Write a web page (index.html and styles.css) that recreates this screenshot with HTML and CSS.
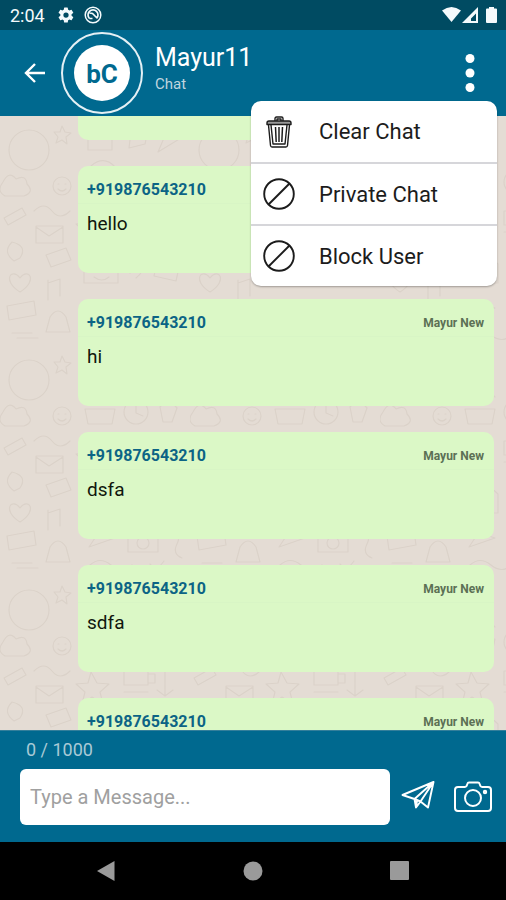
FILE: index.html
```html
<!DOCTYPE html>
<html lang="en">
<head>
<meta charset="utf-8">
<meta name="viewport" content="width=device-width, initial-scale=1">
<title>Mayur11 - Chat</title>
<link rel="stylesheet" href="styles.css">
</head>
<body>
<div class="app">
  <div class="status">
    <span class="time">2:04</span>
    <svg class="gear" width="18" height="18" viewBox="0 0 24 24"><path fill="currentColor" d="M19.4 13a7.500 7.500 0 0 0 0-2l2.100-1.600a.5.5 0 0 0 .1-.7l-2-3.400a.5.5 0 0 0-.6-.2l-2.500 1a7.300 7.300 0 0 0-1.700-1l-.4-2.600a.5.5 0 0 0-.5-.5h-4a.5.5 0 0 0-.5.5L9 5.100a7.300 7.300 0 0 0-1.700 1l-2.500-1a.5.5 0 0 0-.6.2l-2 3.400a.5.5 0 0 0 .1.7L4.500 11a7.500 7.500 0 0 0 0 2l-2.200 1.600a.5.5 0 0 0-.1.7l2 3.400c.1.200.4.300.6.200l2.500-1a7.300 7.300 0 0 0 1.700 1l.4 2.600c0 .3.200.5.5.5h4c.3 0 .5-.2.5-.5l.4-2.600a7.300 7.300 0 0 0 1.700-1l2.500 1c.2.100.5 0 .6-.2l2-3.400a.5.5 0 0 0-.1-.7zM12 15.500a3.500 3.500 0 1 1 0-7 3.500 3.500 0 0 1 0 7z"/></svg>
    <svg class="pie" width="18" height="18" viewBox="0 0 18 18" fill="none" stroke="currentColor"><circle cx="9" cy="9" r="7.800" stroke-width="1.500"/><path stroke-width="1.700" d="M5.500 12.500A5 5 0 1 1 12.500 12.500M5.500 12.500h3M5.500 7l3 .5 4 4"/></svg>
    <svg class="signal" width="56" height="18" viewBox="0 0 56 18" fill="currentColor"><path d="M0 4.500Q9.500-2.500 19 4.500L9.500 16z"/><path fill-rule="evenodd" d="M20 17L36 1v16zM29 15h5V7.500l-5 5z"/><path d="M45 2.500h2V1h5v1.500h2a1 1 0 0 1 1 1V16a1 1 0 0 1-1 1h-9a1 1 0 0 1-1-1V3.500a1 1 0 0 1 1-1z"/></svg>
  </div>

  <header class="header">
    <button class="back" aria-label="Back"><svg width="22" height="20" viewBox="0 0 22 20" fill="none" stroke="currentColor" stroke-width="2.400"><path d="M21 10H2M11 1L2 10l9 9"/></svg></button>
    <div class="avatar"><span class="initials">bC</span></div>
    <div class="heading">
      <h1 class="name">Mayur11</h1>
      <p class="kind">Chat</p>
    </div>
    <button class="more" aria-label="More options"><svg width="10" height="40" viewBox="0 0 10 40" fill="currentColor"><circle cx="5" cy="5.500" r="4.500"/><circle cx="5" cy="20" r="4.500"/><circle cx="5" cy="34.500" r="4.500"/></svg></button>
    <div class="menu">
      <button class="item">
        <svg width="32" height="32" viewBox="0 0 32 32" fill="none" stroke="currentColor" stroke-width="1.400" stroke-linejoin="round"><path d="M12 5V2.500q0-1.500 1.500-1.500h5q1.500 0 1.500 1.500V5M14 5V3h4v2"/><path d="M4 8.500V7q0-2 2-2h20q2 0 2 2v1.500z" fill="#999"/><path d="M5.500 9l2 20.500q.2 1.500 1.500 1.500h14q1.300 0 1.500-1.500l2-20.500M8 9l2 19h12l2-19"/><path d="M12.500 11l.7 15M16 11v15M19.500 11l-.7 15" stroke-width="1.500"/></svg>
        <span>Clear Chat</span>
      </button>
      <button class="item">
        <svg width="32" height="32" viewBox="0 0 32 32" fill="none" stroke="currentColor" stroke-width="1.900"><circle cx="16" cy="16" r="14.800"/><path d="M5.500 26.500l21-21"/></svg>
        <span>Private Chat</span>
      </button>
      <button class="item">
        <svg width="32" height="32" viewBox="0 0 32 32" fill="none" stroke="currentColor" stroke-width="1.900"><circle cx="16" cy="16" r="14.800"/><path d="M5.500 26.500l21-21"/></svg>
        <span>Block User</span>
      </button>
    </div>
  </header>

  <main class="thread">
    <svg class="doodles" width="100%" height="100%" aria-hidden="true">
      <defs>
        <pattern id="doodle" width="190" height="230" patternUnits="userSpaceOnUse">
          <g fill="none" stroke="#dbd2c9" stroke-width="1.200" stroke-linecap="round" stroke-linejoin="round">
            <circle cx="29" cy="34" r="20"/>
            <path d="M3 66q6-12 13-3 10-5 11 5 8 8-3 12H5q-9-5-2-14zM62 10l3 6 6 1-5 4 1 7-5-4-6 3 2-6-4-5 6 0zM62 61a9 9 0 1 1 0 18 9 9 0 0 1 0-18zm-4 7h1m6 0h1m-8 5q4 4 8 0"/>
            <path d="M4 102l18-10 4 7-18 10zM34 95q10-10 18 0t18 0M36 110h27v17H36zM36 111l13 9 14-9M12 126q-10 10 2 19l6-3q8-12-8-16zM46 139l20-7 5 12-20 7z"/>
            <path d="M20 162c-8-11-19 2 0 14 19-12 8-25 0-14zM48 164v20m0-17l12-4v17M7 190l27-5 2 14-27 5zM50 201q8-12 16 0l4 15H46zM12 217h20m-15 5h21"/>
            <path d="M88 14h24v20H88zM93 9v9m14-9v9M88 22h24M132 8q18 2 13 20l-16 4zM157 12l24 10-23 14 6-14z"/>
            <path d="M91 50q13-11 24 1M85 63h30l-3 15H88zM136 54a12 12 0 1 1 0 24 12 12 0 0 1 0-24zm0 4v9l7 3M160 61l8-9 9 10-5 14h-9z"/>
            <path d="M91 96l6 11 12 1-9 8 3 12-11-7-10 7 3-12-9-8 12-1zM124 95h24v14h-24zM148 98h7v9h-7M124 116h24M165 95v25m-8-6l8 6 8-6"/>
            <path d="M84 148q17-18 34 0v19H84zM91 153h6m8 0h6m-17 8q8 6 15 0M130 141q9 8 0 16m6-20q15 13 0 25M158 142l22 5-4 18-22-5z"/>
            <path d="M90 184l25 8-26 9 6-9zM128 189h30v17h-30zM135 185h12v4h-12M143 191a6 6 0 1 1 0 12 6 6 0 0 1 0-12M170 186q12 2 7 12t5 14M90 219q10-9 21 0t21 0M150 218l6 7 8-10"/>
          </g>
        </pattern>
      </defs>
      <rect width="100%" height="100%" fill="url(#doodle)"/>
    </svg>
    <article class="bubble tail"></article>
    <article class="bubble"><div class="meta"><span class="phone">+919876543210</span></div><p class="text">hello</p></article>
    <article class="bubble"><div class="meta"><span class="phone">+919876543210</span><span class="sender">Mayur New</span></div><p class="text">hi</p></article>
    <article class="bubble"><div class="meta"><span class="phone">+919876543210</span><span class="sender">Mayur New</span></div><p class="text">dsfa</p></article>
    <article class="bubble"><div class="meta"><span class="phone">+919876543210</span><span class="sender">Mayur New</span></div><p class="text">sdfa</p></article>
    <article class="bubble"><div class="meta"><span class="phone">+919876543210</span><span class="sender">Mayur New</span></div></article>
  </main>

  <form class="composer">
    <label class="count" for="message">0 / 1000</label>
    <div class="row">
      <input class="input" id="message" type="text" maxlength="1000" placeholder="Type a Message...">
      <button class="send" type="button" aria-label="Send"><svg width="34" height="28" viewBox="0 0 34 28" fill="none" stroke="currentColor" stroke-width="1.900" stroke-linejoin="round"><path d="M1.500 14L32.500 1 27 26.500l-7.500-6-4.500 6-1.500-8.500zM13.500 18L32.500 1 19.500 20.500M13.500 18l6 2.500M15 26.500l1-7"/></svg></button>
      <button class="camera" type="button" aria-label="Camera"><svg width="38" height="32" viewBox="0 0 38 32" fill="none" stroke="currentColor" stroke-width="2" stroke-linejoin="round"><path d="M4 6h7q1.500 0 2-2l.5-1.500q.3-1 1.500-1h9q1.200 0 1.500 1L26 4q.5 2 2 2h6q3 0 3 3v18q0 3-3 3H4q-3 0-3-3V9q0-3 3-3z"/><circle cx="19" cy="17" r="8"/><circle cx="31" cy="11" r="1.200"/></svg></button>
    </div>
  </form>

  <nav class="system">
    <button aria-label="System back"><svg width="20" height="22" viewBox="0 0 20 22" fill="currentColor"><path d="M1 11L18.500 1v20z"/></svg></button>
    <button aria-label="Home"><svg width="20" height="20" viewBox="0 0 20 20" fill="currentColor"><circle cx="10" cy="10" r="9.500"/></svg></button>
    <button aria-label="Recent apps"><svg width="20" height="20" viewBox="0 0 20 20" fill="currentColor"><rect x="0" y="0" width="19" height="19" rx="1"/></svg></button>
  </nav>
</div>
</body>
</html>
```
FILE: styles.css
```css
* { box-sizing: border-box; }
body { margin: 0; font-family: Roboto, "Liberation Sans", sans-serif; }
button { border: 0; padding: 0; background: none; color: inherit; font: inherit; display: flex; align-items: center; justify-content: center; }
h1, p { margin: 0; font-weight: 400; }
svg { display: block; flex: none; }

.app { height: 100vh; display: flex; flex-direction: column; }

.status { flex: none; height: 30px; padding: 0 8px 0 10px; display: flex; align-items: center; background: #004b62; color: #f4fafc; }
.time { font-size: 18px; }
.gear { margin-left: 12px; }
.pie { margin-left: 9px; }
.signal { margin-left: auto; }

.header { position: relative; z-index: 1; flex: none; height: 86px; padding: 0 24px; display: flex; align-items: center; background: #00698f; color: #fff; }
.back { width: 22px; height: 48px; }
.avatar { width: 82px; height: 82px; margin-left: 15px; border: 2px solid #e4f0f5; border-radius: 50%; display: flex; align-items: center; justify-content: center; }
.initials { width: 56px; height: 56px; border-radius: 50%; background: #fff; color: #00698f; font-size: 26px; font-weight: 700; line-height: 58px; text-align: center; }
.heading { flex: 1; margin-left: 12px; padding-bottom: 6px; }
.name { font-size: 25px; line-height: 28px; }
.kind { font-size: 15px; line-height: 24px; color: #bfd5df; }
.more { width: 24px; height: 48px; }

.menu { position: absolute; top: 71px; right: 9px; width: 246px; overflow: hidden; border-radius: 10px; background: #fff; box-shadow: 0 1px 2px rgba(0, 0, 0, 0.3); color: #1c1c1c; }
.item { width: 100%; height: 61px; padding-left: 12px; gap: 24px; justify-content: flex-start; font-size: 22px; }
.item + .item { height: 62px; border-top: 2px solid #d6d6da; }

.thread { position: relative; flex: 1; min-height: 0; overflow: hidden; padding: 0 12px 0 78px; background: #e4dcd4; }
.doodles { position: absolute; inset: 0; }
.bubble { position: relative; height: 107px; margin-bottom: 26px; border-radius: 10px; background: #dbf8c6; }
.tail { height: 24px; border-radius: 0 0 10px 10px; }
.meta { height: 38px; padding: 10px 10px 0 9px; display: flex; align-items: center; justify-content: space-between; border-bottom: 1px solid #d8f5c5; }
.phone { font-size: 16px; font-weight: 700; color: #0c6485; }
.sender { font-size: 12px; font-weight: 700; color: #5c7055; }
.text { padding: 6px 9px; font-size: 19px; line-height: 28px; color: #10170d; }

.composer { flex: none; padding: 8px 14px 17px 20px; background: #00698f; border-top: 1px solid #347f9b; color: #fff; }
.count { display: block; padding-left: 6px; font-size: 18px; line-height: 22px; color: #a9c9d6; }
.row { margin-top: 8px; display: flex; align-items: center; }
.input { flex: 1; min-width: 0; height: 56px; padding: 0 10px; border: 0; border-radius: 6px; background: #fff; font: 20px Roboto, "Liberation Sans", sans-serif; color: #222; }
.input::placeholder { color: #a0a0a0; }
.send { width: 36px; height: 48px; margin-left: 10px; padding-bottom: 5px; }
.camera { width: 38px; height: 48px; margin-left: 18px; }

.system { flex: none; height: 58px; padding: 0 33px; display: flex; align-items: center; background: #000; color: #9a9a9a; }
.system button { flex: 1; height: 48px; }
```
